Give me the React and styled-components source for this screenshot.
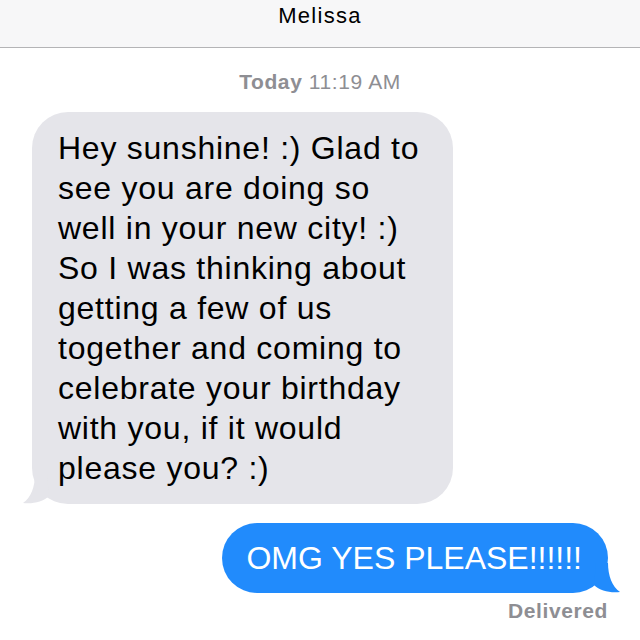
import styled, { createGlobalStyle } from "styled-components";

const GlobalStyle = createGlobalStyle`
  html, body {
    margin: 0;
    padding: 0;
    background: #ffffff;
  }
  body {
    font-family: "Liberation Sans", Arial, sans-serif;
    -webkit-font-smoothing: antialiased;
  }
`;

const Screen = styled.div`
  width: 640px;
  height: 640px;
  overflow: hidden;
  display: flex;
  flex-direction: column;
  background: #fff;
`;

const Header = styled.header`
  height: 48px;
  box-sizing: border-box;
  background: #f7f7f8;
  border-bottom: 1px solid #b4b4b6;
  display: flex;
  justify-content: center;
  align-items: flex-start;
  padding-top: 3px;
`;

const Title = styled.h1`
  margin: 0;
  font-size: 22px;
  font-weight: 400;
  line-height: 26px;
  letter-spacing: 1.3px;
  color: #000;
`;

const Stamp = styled.div`
  margin-top: 22px;
  text-align: center;
  font-size: 21px;
  line-height: 24px;
  letter-spacing: 0.6px;
  color: #8e8e93;

  b {
    font-weight: 700;
  }
`;

const Thread = styled.div`
  display: flex;
  flex-direction: column;
  padding: 0 32px;
  margin-top: 18px;
`;

const Row = styled.div`
  display: flex;
  justify-content: ${({ $mine }) => ($mine ? "flex-end" : "flex-start")};
  margin-top: ${({ $gap }) => $gap || 0}px;
`;

const Bubble = styled.div`
  position: relative;
  box-sizing: border-box;
  width: ${({ $mine }) => ($mine ? "auto" : "421px")};
  padding: ${({ $mine }) => ($mine ? "15px 26px 15px 24px" : "16px 20px 16px 26px")};
  border-radius: 36px;
  background: ${({ $mine }) => ($mine ? "#218bfc" : "#e5e5ea")};
  color: ${({ $mine }) => ($mine ? "#fff" : "#000")};
  font-size: 32px;
  line-height: 40px;
  letter-spacing: ${({ $mine }) => ($mine ? "0" : "0.75px")};
  white-space: pre-line;
`;

const Tail = styled.svg`
  position: absolute;
  bottom: 0;
  ${({ $mine }) => ($mine ? "right: -12px;" : "left: -9px;")}
  width: 34px;
  height: 30px;
`;

const Status = styled.div`
  align-self: flex-end;
  margin-top: 6px;
  font-size: 21px;
  font-weight: 700;
  line-height: 24px;
  letter-spacing: 0.6px;
  color: #8e8e93;
`;

const messages = [
  {
    mine: false,
    text:
      "Hey sunshine! :) Glad to\nsee you are doing so\nwell in your new city! :)\nSo I was thinking about\ngetting a few of us\ntogether and coming to\ncelebrate your birthday\nwith you, if it would\nplease you? :)",
  },
  { mine: true, text: "OMG YES PLEASE!!!!!!" },
];

const BubbleTail = ({ mine, color }) => (
  <Tail $mine={mine} viewBox="0 0 34 30">
    {mine ? (
      <path d="M10 0 L22 0 C22 12 26 24 34 29 C24 30 14 28 8 22 Z" fill={color} />
    ) : (
      <path d="M24 0 L12 0 C12 12 8 24 0 29 C10 30 20 28 26 22 Z" fill={color} />
    )}
  </Tail>
);

export default function App() {
  return (
    <>
      <GlobalStyle />
      <Screen>
        <Header>
          <Title>Melissa</Title>
        </Header>
        <Stamp>
          <b>Today</b> 11:19 AM
        </Stamp>
        <Thread>
          {messages.map((m, i) => (
            <Row key={i} $mine={m.mine} $gap={i === 0 ? 0 : 19}>
              <Bubble $mine={m.mine}>
                {m.text}
                <BubbleTail mine={m.mine} color={m.mine ? "#218bfc" : "#e5e5ea"} />
              </Bubble>
            </Row>
          ))}
          <Status>Delivered</Status>
        </Thread>
      </Screen>
    </>
  );
}
